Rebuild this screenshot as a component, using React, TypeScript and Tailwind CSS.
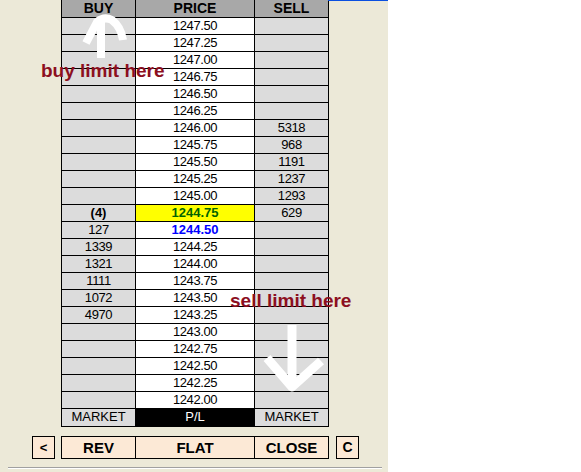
import React from 'react';

type Row = { buy: string; price: string; sell: string; kind?: 'last' | 'bid' };

const rows: Row[] = [
  { buy: '', price: '1247.50', sell: '' },
  { buy: '', price: '1247.25', sell: '' },
  { buy: '', price: '1247.00', sell: '' },
  { buy: '', price: '1246.75', sell: '' },
  { buy: '', price: '1246.50', sell: '' },
  { buy: '', price: '1246.25', sell: '' },
  { buy: '', price: '1246.00', sell: '5318' },
  { buy: '', price: '1245.75', sell: '968' },
  { buy: '', price: '1245.50', sell: '1191' },
  { buy: '', price: '1245.25', sell: '1237' },
  { buy: '', price: '1245.00', sell: '1293' },
  { buy: '(4)', price: '1244.75', sell: '629', kind: 'last' },
  { buy: '127', price: '1244.50', sell: '', kind: 'bid' },
  { buy: '1339', price: '1244.25', sell: '' },
  { buy: '1321', price: '1244.00', sell: '' },
  { buy: '1111', price: '1243.75', sell: '' },
  { buy: '1072', price: '1243.50', sell: '' },
  { buy: '4970', price: '1243.25', sell: '' },
  { buy: '', price: '1243.00', sell: '' },
  { buy: '', price: '1242.75', sell: '' },
  { buy: '', price: '1242.50', sell: '' },
  { buy: '', price: '1242.25', sell: '' },
  { buy: '', price: '1242.00', sell: '' },
];

const font = "font-['Liberation_Sans',Arial,sans-serif]";

export default function App() {
  return (
    <div className={`flex w-[581px] h-[472px] bg-white ${font}`}>
      {/* DOM panel */}
      <div className="relative w-[388px] h-[472px] bg-[#ece9d8] pt-px">
        <div className="absolute left-[328px] top-0 w-[60px] h-px bg-[#0a4fe0]" />

        {/* Ladder */}
        <div className="ml-[61px] -mt-px w-[268px] border-l border-black flex flex-col">
          <div className="flex h-[18px] bg-[#a8a8a8] border-b border-black text-[14px] font-bold text-black leading-[17px]">
            <div className="w-[74px] border-r border-black text-center">BUY</div>
            <div className="w-[119px] border-r border-black text-center">PRICE</div>
            <div className="w-[74px] border-r border-black text-center">SELL</div>
          </div>

          {rows.map((r) => (
            <div key={r.price} className="flex h-[17px] border-b border-black text-[13px] leading-[16px] tracking-[-0.4px] text-black">
              <div className={`w-[74px] border-r border-black bg-[#dcdcdc] text-center ${r.kind === 'last' ? 'font-bold tracking-normal' : ''}`}>
                {r.buy}
              </div>
              <div
                className={`w-[119px] border-r border-black text-center ${
                  r.kind === 'last'
                    ? 'bg-[#ffff00] text-[#006400] font-bold tracking-normal'
                    : r.kind === 'bid'
                    ? 'bg-white text-[#0000ff] font-bold tracking-normal'
                    : 'bg-white'
                }`}
              >
                {r.price}
              </div>
              <div className="w-[74px] border-r border-black bg-[#dcdcdc] text-center">{r.sell}</div>
            </div>
          ))}

          <div className="flex h-[18px] border-b border-black text-[13px] leading-[16px] text-black">
            <div className="w-[74px] border-r border-black bg-[#dcdcdc] text-center">MARKET</div>
            <div className="w-[119px] border-r border-black bg-black text-white text-center">P/L</div>
            <div className="w-[74px] border-r border-black bg-[#dcdcdc] text-center">MARKET</div>
          </div>
        </div>

        {/* Buttons */}
        <div className="flex items-start mt-[9px] ml-[32px] text-[15px] font-bold text-black leading-[21px]">
          <button className="w-[23px] h-[23px] border border-black bg-[#fce9d6] text-center text-[13px]">&lt;</button>
          <div className="ml-[6px] flex w-[268px] h-[23px] border border-black bg-[#fce9d6]">
            <button className="w-[74px] border-r border-black text-center">REV</button>
            <button className="w-[119px] border-r border-black text-center">FLAT</button>
            <button className="w-[73px] text-center">CLOSE</button>
          </div>
          <button className="ml-[7px] w-[23px] h-[23px] border border-black bg-[#fce9d6] text-center text-[14px]">C</button>
        </div>

        <div className="ml-[8px] mt-[8px] w-[374px] h-px bg-[#a0a0a0] border-b border-b-white box-content" />

        {/* Annotations */}
        <svg className="absolute left-0 top-0 pointer-events-none" width="388" height="472">
          <g stroke="white" strokeWidth="8" fill="none" strokeLinejoin="round">
            <path d="M101 22 V58" />
            <path d="M86 43 L97 22 Q104 16 112 20 Q121 27 123 40" />
            <path d="M292 325 V387" strokeWidth="9" />
            <path d="M267 358 L292 387 L321 361" strokeWidth="9" />
          </g>
        </svg>
        <div className="absolute left-[41px] top-[61px] text-[19px] font-bold leading-none text-[#8c0f1f] whitespace-nowrap">
          buy limit here
        </div>
        <div className="absolute left-[230px] top-[291px] text-[19px] font-bold leading-none text-[#8c0f1f] whitespace-nowrap">
          sell limit here
        </div>
      </div>
      <div className="flex-1" />
    </div>
  );
}
